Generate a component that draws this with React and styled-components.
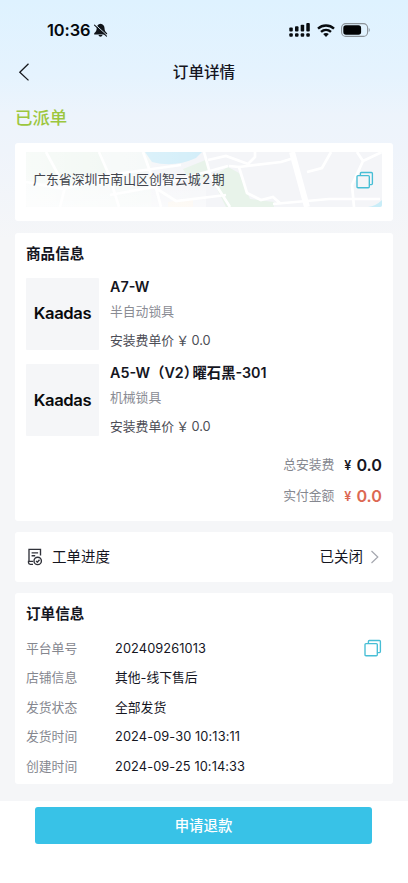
import React from "react";
import styled, { createGlobalStyle } from "styled-components";

const GlobalStyle = createGlobalStyle`
  *, *::before, *::after { box-sizing: border-box; }
  body {
    margin: 0;
    background: #fff;
    font-family: Inter, "Noto Sans CJK SC", sans-serif;
    color: #15161f;
  }
`;

const Page = styled.div`
  width: 408px;
  height: 883px;
  display: flex;
  flex-direction: column;
  overflow: hidden;
`;

const Content = styled.main`
  height: 801px;
  padding: 0 15px;
  background: linear-gradient(180deg, #def2ff 0px, #e5f3fe 75px, #edf4fc 115px, #eff4fb 150px, #f5f6f8 240px);
`;

const StatusBar = styled.div`
  height: 52px;
  padding: 8px 22px 0 32px;
  display: flex;
  align-items: center;
  justify-content: space-between;
`;

const StatusGroup = styled.div`
  display: flex;
  align-items: center;
  gap: ${(p) => p.$gap}px;
`;

const Clock = styled.span`
  font-size: 16.4px;
  line-height: 20px;
  font-weight: 600;
  letter-spacing: -0.1px;
  color: #05080c;
`;

const NavBar = styled.header`
  height: 41px;
  display: grid;
  grid-template-columns: 60px 1fr 60px;
  align-items: center;
`;

const BackButton = styled.button`
  width: 20px;
  height: 22px;
  padding: 0;
  border: 0;
  background: none;
  display: flex;
  align-items: flex-start;
`;

const NavTitle = styled.h1`
  margin: 0;
  text-align: center;
  font-size: 15.6px;
  line-height: 24px;
  font-weight: 500;
`;

const OrderState = styled.div`
  height: 50px;
  line-height: 50px;
  font-size: 17.4px;
  font-weight: 500;
  color: #9cc63e;
`;

const Card = styled.section`
  height: ${(p) => p.$height}px;
  margin-bottom: ${(p) => p.$after ?? 11}px;
  padding: ${(p) => p.$pad ?? "0 11px"};
  border-radius: 3px;
  background: #fff;
`;

const AddressPanel = styled.div`
  height: 55px;
  display: grid;
  align-items: center;
  overflow: hidden;
  border-radius: 2px;
  & > * { grid-area: 1 / 1; }
`;

const AddressRow = styled.div`
  display: flex;
  align-items: center;
  justify-content: space-between;
  padding: 0 8px 0 7px;
  font-size: 12.9px;
  line-height: 20px;
  color: #43454d;
`;

const AddressText = styled.span`
  word-spacing: -2px;
`;

const Heading = styled.h2`
  margin: 0;
  height: 40px;
  line-height: 42px;
  font-size: 14.6px;
  font-weight: 700;
`;

const Product = styled.article`
  display: flex;
  gap: 11px;
  height: 72px;
  margin: ${(p) => p.$top}px 0 0;
`;

const Thumb = styled.div`
  width: 73px;
  height: 72px;
  padding-bottom: 1px;
  display: flex;
  align-items: center;
  justify-content: center;
  background: #f5f6f8;
  border-radius: 1px;
  color: #090a0c;
  font-size: 16.6px;
  font-weight: 600;
  letter-spacing: -0.4px;
`;

const ProductText = styled.div`
  display: flex;
  flex-direction: column;
`;

const ProductName = styled.h3`
  margin: 0;
  height: 18px;
  line-height: 18px;
  font-size: 14.3px;
  font-weight: 600;
  white-space: nowrap;
`;

const ClosingParen = styled.span`
  letter-spacing: -5.5px;
`;

const ProductKind = styled.div`
  height: 31px;
  line-height: 31px;
  font-size: 12.8px;
  color: #8a8c94;
`;

const ProductPrice = styled.div`
  height: 27px;
  line-height: 28px;
  font-size: 12.8px;
  color: #4c4d56;
  white-space: pre;
  word-spacing: -1.3px;
`;

const Totals = styled.div`
  margin-top: 13px;
`;

const TotalRow = styled.div`
  height: 31px;
  display: flex;
  align-items: center;
  justify-content: flex-end;
  color: ${(p) => (p.$accent ? "#dc6853" : "#15161f")};
`;

const TotalLabel = styled.span`
  margin-right: 10px;
  font-size: 12.8px;
  line-height: 20px;
  padding-top: 1px;
  color: #85878f;
`;

const Yen = styled.span`
  margin-right: 5px;
  padding-top: 2px;
  font-size: 12.5px;
  font-weight: 600;
`;

const Amount = styled.span`
  font-size: 16.2px;
  font-weight: 600;
`;

const ProgressRow = styled.div`
  height: 50px;
  display: flex;
  align-items: center;
  font-size: 14.5px;
  line-height: 20px;
`;

const ProgressLabel = styled.span`
  flex: 1;
  margin-left: 8px;
`;

const ProgressValue = styled.span`
  margin-right: 7px;
`;

const Field = styled.div`
  height: 29.5px;
  display: flex;
  align-items: center;
  font-size: 12.8px;
  line-height: 20px;
`;

const FieldLabel = styled.span`
  width: 89px;
  padding-top: 1.5px;
  color: #85878f;
`;

const FieldValue = styled.span`
  flex: 1;
  padding-top: ${(p) => (p.$numeric ? 2 : 1.5)}px;
  letter-spacing: ${(p) => (p.$numeric ? 0.1 : 0)}px;
`;

const Footer = styled.footer`
  flex: 1;
  padding: 6px 36px 0 35px;
  background: #fff;
`;

const RefundButton = styled.button`
  display: block;
  width: 100%;
  height: 37px;
  padding: 0;
  border: 0;
  border-radius: 3px;
  background: #38c2e7;
  color: #fff;
  font: 500 14.4px/37px Inter, "Noto Sans CJK SC", sans-serif;
`;

const MutedBell = () => (
  <svg width="16" height="15" viewBox="0 0 16 15">
    <path d="M7.500.8C5 1 3.700 2.900 3.700 5c0 2.700-1 4-2.500 5.200v1.200h12.900v-1.200C12.600 9 11.500 7.700 11.500 5 11.500 2.900 10 1 7.500.8ZM5.500 12c.3 1.200 1 1.700 2 1.700s1.700-.5 2-1.700Z" fill="#11151a" />
    <path d="m2.300 1.600 12 11" stroke="#e3f3fe" strokeWidth="1" />
    <path d="m1.500 2.100 12 11" stroke="#11151a" strokeWidth="1.100" strokeLinecap="round" />
  </svg>
);

const Signal = () => (
  <svg width="21" height="14" viewBox="0 0 21 14" fill="#080c10">
    <rect x="0.300" y="4.500" width="3.500" height="4" rx="0.900" />
    <rect x="6" y="3.300" width="3.500" height="5.200" rx="0.900" />
    <rect x="11.700" y="1.700" width="3.500" height="6.800" rx="0.900" />
    <rect x="17.300" y="0" width="3.500" height="8.500" rx="0.900" />
    <rect x="0.300" y="10.300" width="3.500" height="3.500" rx="1" />
    <rect x="6" y="10.300" width="3.500" height="3.500" rx="1" />
    <rect x="11.700" y="10.300" width="3.500" height="3.500" rx="1" />
    <rect x="17.300" y="10.300" width="3.500" height="3.500" rx="1" />
  </svg>
);

const Wifi = () => (
  <svg width="18" height="13" viewBox="0 0 18 13" fill="none" stroke="#080c10" strokeWidth="2.400">
    <path d="M1 4.600C5.500.5 12.500.5 17 4.600" />
    <path d="M4 7.900c3-2.700 7-2.700 10 0" />
    <path d="M6.200 10.100c1.600-1.400 4-1.400 5.600 0L9 12.900Z" fill="#080c10" stroke="none" />
  </svg>
);

const Battery = () => (
  <svg width="30" height="14" viewBox="0 0 30 14">
    <rect x="0.600" y="0.600" width="26" height="12.800" rx="4.200" fill="none" stroke="#8b9298" strokeWidth="1.100" />
    <rect x="2.300" y="2.300" width="17.800" height="9.400" rx="2.600" fill="#020304" />
    <path d="M27.800 5v4c1.100-.5 1.100-3.500 0-4Z" fill="#727b83" />
  </svg>
);

const Chevron = ({ left }) =>
  left ? (
    <svg width="20" height="20" viewBox="0 0 20 20" fill="none" stroke="#17191e" strokeWidth="1.300">
      <path d="m13.500 1.800-8.700 8.400 8.700 8.200" />
    </svg>
  ) : (
    <svg width="12" height="14" viewBox="0 0 12 14" fill="none" stroke="#a5a7af" strokeWidth="1.200">
      <path d="m1.500 1 6.300 6-6.300 6" />
    </svg>
  );

const CopyIcon = () => (
  <svg width="18" height="18" viewBox="0 0 18 18" fill="none" stroke="#47bed5" strokeWidth="1.350">
    <rect x="1" y="4.600" width="12.300" height="12.100" rx="1" />
    <path d="M4.400 4.500V2.500q0-1 1-1h10q1 0 1 1v10.100q0 1-1 1h-2" />
  </svg>
);

const WorkOrderIcon = () => (
  <svg width="18" height="18" viewBox="0 0 18 18" fill="none" stroke="#30323a" strokeWidth="1.350">
    <path d="M14.500 7.600V1.300H3v12.200M7 16.300H4.200q-1.700 0-1.700-1.700v-1.200h4.700M5.600 4.800h6.500M5.600 7.700h3.600" />
    <circle cx="11.700" cy="12.900" r="3.700" />
    <path d="m10.100 12.900 1.200 1.300 2.200-2.500" />
  </svg>
);

const MapArt = () => (
  <svg width="356" height="55" viewBox="0 0 356 55">
    <defs>
      <linearGradient id="map-fade" x2="1" y2="0">
        <stop offset="0" stopColor="#fff" stopOpacity=".6" />
        <stop offset=".5" stopColor="#fff" stopOpacity="0" />
      </linearGradient>
      <linearGradient id="map-fade-down" x2="0" y2="1">
        <stop offset=".3" stopColor="#fff" stopOpacity="0" />
        <stop offset="1" stopColor="#fff" stopOpacity=".45" />
      </linearGradient>
    </defs>
    <path d="M0 0h356v55H0Z" fill="#f4f5f8" />
    <path d="M0 0h125v55H0Z" fill="#f4f8f7" />
    <path d="M0 0h75l7 20-42 13-40-4Z" fill="#edf5ef" />
    <path d="m157 17 25-10v20l20-12 11 6 11 26 24 3v5h-48l-15-30-21 5Z" fill="#e8f3ea" />
    <path d="M119 0h57l-6 6q-22 10-44 4Z" fill="#d3eef9" />
    <path d="M342 55q8-1 14-7v7Z" fill="#c9edf8" />
    <path d="M142 55V50l25-4v9Z" fill="#fbf5ed" />
    <g fill="none" stroke="#fff" strokeWidth="2.700">
      <path d="M73 0l10 23 10 32M0 30l38 7 52-15 65-9M34 55l5-20L20 0M117 0l13 36 5 19M126 35l76-21M84 43l44-8 22 14 50-6" />
      <path d="M178 0l7 25 19 30M182 8l18-4 22 8 7-7v-7M203 14l10 1 8 26 14 7 12-3 8 7M213 15l42-5 13-4M247 52l56-5 51 0" />
      <path d="m266 0 15 55" strokeWidth="6" />
      <path d="m281 20 15-4 9-16M331 0l6 9 19-9M337 9l-11 24 2 22" />
    </g>
    <path d="M0 0h356v55H0Z" fill="url(#map-fade)" />
    <path d="M0 0h180v55H0Z" fill="url(#map-fade-down)" />
  </svg>
);

const products = [
  { name: "A7-W", kind: "半自动锁具", top: 4.5 },
  { name: <>A5-W（V2<ClosingParen>）</ClosingParen>曜石黑-301</>, kind: "机械锁具", top: 14.6 },
];

const fields = [
  { label: "平台单号", value: "202409261013", numeric: true, copy: true },
  { label: "店铺信息", value: "其他-线下售后" },
  { label: "发货状态", value: "全部发货" },
  { label: "发货时间", value: "2024-09-30 10:13:11", numeric: true },
  { label: "创建时间", value: "2024-09-25 10:14:33", numeric: true },
];

export default function App() {
  return (
    <Page>
      <GlobalStyle />
      <Content>
        <StatusBar>
          <StatusGroup $gap={3}>
            <Clock>10:36</Clock>
            <MutedBell />
          </StatusGroup>
          <StatusGroup $gap={6.5}>
            <Signal />
            <Wifi />
            <Battery />
          </StatusGroup>
        </StatusBar>
        <NavBar>
          <BackButton aria-label="返回"><Chevron left /></BackButton>
          <NavTitle>订单详情</NavTitle>
        </NavBar>
        <OrderState>已派单</OrderState>
        <Card $height={78} $after={12} $pad="9px 11px 0">
          <AddressPanel>
            <MapArt />
            <AddressRow>
              <AddressText>广东省深圳市南山区创智云城 2 期</AddressText>
              <CopyIcon />
            </AddressRow>
          </AddressPanel>
        </Card>
        <Card $height={288}>
          <Heading>商品信息</Heading>
          {products.map((p) => (
            <Product key={p.kind} $top={p.top}>
              <Thumb>Kaadas</Thumb>
              <ProductText>
                <ProductName>{p.name}</ProductName>
                <ProductKind>{p.kind}</ProductKind>
                <ProductPrice>安装费单价 ￥ 0.0</ProductPrice>
              </ProductText>
            </Product>
          ))}
          <Totals>
            <TotalRow>
              <TotalLabel>总安装费</TotalLabel><Yen>¥</Yen><Amount>0.0</Amount>
            </TotalRow>
            <TotalRow $accent>
              <TotalLabel>实付金额</TotalLabel><Yen>¥</Yen><Amount>0.0</Amount>
            </TotalRow>
          </Totals>
        </Card>
        <Card $height={50}>
          <ProgressRow>
            <WorkOrderIcon />
            <ProgressLabel>工单进度</ProgressLabel>
            <ProgressValue>已关闭</ProgressValue>
            <Chevron />
          </ProgressRow>
        </Card>
        <Card $height={191} $after={0}>
          <Heading>订单信息</Heading>
          {fields.map((f) => (
            <Field key={f.label}>
              <FieldLabel>{f.label}</FieldLabel>
              <FieldValue $numeric={f.numeric}>{f.value}</FieldValue>
              {f.copy && <CopyIcon />}
            </Field>
          ))}
        </Card>
      </Content>
      <Footer><RefundButton>申请退款</RefundButton></Footer>
    </Page>
  );
}
